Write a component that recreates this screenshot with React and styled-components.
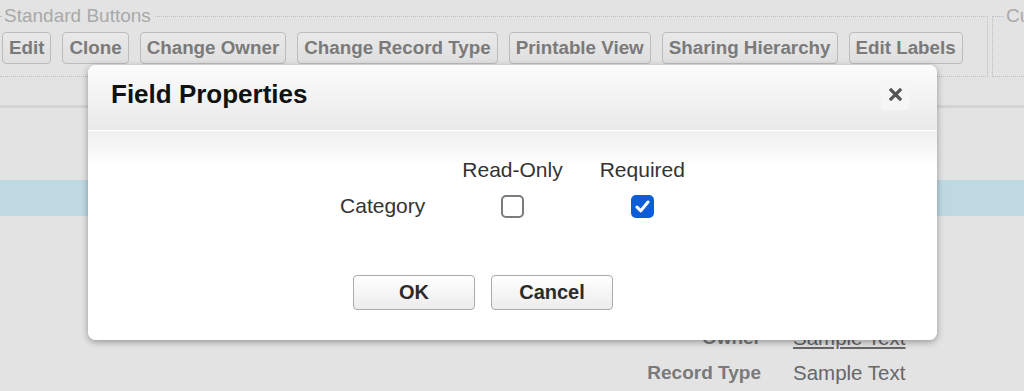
import React from 'react'
import styled, { createGlobalStyle } from 'styled-components'

const GlobalStyle = createGlobalStyle`
  html, body {
    margin: 0;
    padding: 0;
  }
  body {
    background: #e3e3e3;
    font-family: "Liberation Sans", Arial, sans-serif;
    overflow: hidden;
  }
`

const Page = styled.div`
  position: relative;
  width: 1024px;
  height: 391px;
  overflow: hidden;
`

const ButtonGroups = styled.div`
  display: flex;
  width: 1300px;
  padding-top: 5px;
`

const Group = styled.fieldset`
  box-sizing: border-box;
  flex: none;
  width: ${p => p.$width}px;
  min-inline-size: 0;
  margin: 0 0 0 ${p => (p.$first ? 0 : 4)}px;
  padding: 5px 0 12px ${p => (p.$first ? 2 : 11)}px;
  border: 1px dotted #bdbdbd;
  border-left: ${p => (p.$first ? 'none' : '1px dotted #bdbdbd')};
`

const Legend = styled.legend`
  padding: 0 4px 0 2px;
  font-size: 19px;
  line-height: 22px;
  color: #a9a9a9;
`

const Toolbar = styled.div`
  display: flex;
  gap: 11px;
`

const ToolButton = styled.button`
  height: 32px;
  margin: 0;
  padding: 0 6px;
  font-family: inherit;
  font-size: 18.8px;
  font-weight: bold;
  color: #7a7a7a;
  background: linear-gradient(#e9e9e9, #dfdfdf);
  border: 1px solid #bcbcbc;
  border-radius: 4px;
`

const Divider = styled.div`
  margin-top: 28px;
  height: 3px;
  background: #d3d3d3;
`

const HighlightRow = styled.div`
  margin-top: 72px;
  height: 36px;
  background: #bfd9e3;
`

const Details = styled.div`
  margin-top: 104px;
`

const DetailRow = styled.div`
  display: grid;
  grid-template-columns: 761px 1fr;
  column-gap: 32px;
  align-items: center;
  height: 35px;
`

const DetailLabel = styled.div`
  text-align: right;
  font-size: 19px;
  font-weight: bold;
  color: #7a7a7a;
`

const DetailValue = styled.div`
  font-size: 20.5px;
  color: #676767;
  text-decoration: ${p => (p.$link ? 'underline' : 'none')};
`

const Dialog = styled.div`
  position: absolute;
  left: 88px;
  top: 65px;
  width: 849px;
  background: #fff;
  border-radius: 8px;
  box-shadow: 0 2px 7px rgba(0, 0, 0, 0.35);
  overflow: hidden;
`

const DialogHeader = styled.div`
  box-sizing: border-box;
  height: 66px;
  display: flex;
  align-items: center;
  justify-content: space-between;
  padding: 0 28px 6px 23px;
  background: linear-gradient(#fcfcfc, #e9e9e9);
  border-bottom: 1px solid #fff;
`

const Title = styled.h2`
  margin: 0;
  font-size: 26px;
  font-weight: bold;
  color: #111;
`

const CloseButton = styled.button`
  width: 28px;
  height: 31px;
  padding: 0;
  display: flex;
  align-items: center;
  justify-content: center;
  background: #f6f6f6;
  border: none;
  border-radius: 4px;
`

const DialogBody = styled.div`
  padding: 27px 0 30px;
  background: linear-gradient(#efefef, #fff 35px);
`

const FieldGrid = styled.div`
  display: grid;
  grid-template-columns: repeat(3, auto);
  justify-content: center;
  align-items: center;
  column-gap: 37px;
  row-gap: 12px;
  font-size: 21px;
  line-height: 24px;
  color: #333;
`

const HeadCell = styled.div`
  text-align: center;
`

const LabelCell = styled.div`
  text-align: right;
`

const Box = styled.span`
  box-sizing: border-box;
  justify-self: center;
  width: 23px;
  height: 23px;
  display: flex;
  align-items: center;
  justify-content: center;
  border-radius: 5px;
  border: 2px solid ${p => (p.$checked ? '#0b5ed7' : '#7b7b7b')};
  background: ${p => (p.$checked ? '#0b5ed7' : '#fff')};
`

const Actions = styled.div`
  display: flex;
  justify-content: center;
  gap: 16px;
  margin-top: 57px;
  padding-right: 59px;
`

const DialogButton = styled.button`
  width: 122px;
  height: 35px;
  margin: 0;
  font-family: inherit;
  font-size: 20px;
  font-weight: bold;
  color: #2b2b2b;
  background: linear-gradient(#fff, #ececec);
  border: 1px solid #ababab;
  border-radius: 4px;
`

function Checkbox({ checked }) {
  return (
    <Box $checked={checked}>
      {checked && (
        <svg width="15" height="13" viewBox="0 0 15 13">
          <path d="M2 7.2 L5.8 10.8 L13 2" fill="none" stroke="#fff" strokeWidth="3" strokeLinecap="round" strokeLinejoin="round" />
        </svg>
      )}
    </Box>
  )
}

const standardButtons = ['Edit', 'Clone', 'Change Owner', 'Change Record Type', 'Printable View', 'Sharing Hierarchy', 'Edit Labels']

export default function App() {
  return (
    <Page>
      <GlobalStyle />
      <ButtonGroups>
        <Group $first $width={988}>
          <Legend>Standard Buttons</Legend>
          <Toolbar>
            {standardButtons.map(label => (
              <ToolButton key={label}>{label}</ToolButton>
            ))}
          </Toolbar>
        </Group>
        <Group $width={220}>
          <Legend>Custom Buttons</Legend>
        </Group>
      </ButtonGroups>
      <Divider />
      <HighlightRow />
      <Details>
        <DetailRow>
          <DetailLabel>Owner</DetailLabel>
          <DetailValue $link>Sample Text</DetailValue>
        </DetailRow>
        <DetailRow>
          <DetailLabel>Record Type</DetailLabel>
          <DetailValue>Sample Text</DetailValue>
        </DetailRow>
      </Details>

      <Dialog>
        <DialogHeader>
          <Title>Field Properties</Title>
          <CloseButton aria-label="Close">
            <svg width="13" height="13" viewBox="0 0 13 13">
              <path d="M2 2 L11 11 M11 2 L2 11" stroke="#555" strokeWidth="3.2" strokeLinecap="square" />
            </svg>
          </CloseButton>
        </DialogHeader>
        <DialogBody>
          <FieldGrid>
            <div />
            <HeadCell>Read-Only</HeadCell>
            <HeadCell>Required</HeadCell>
            <LabelCell>Category</LabelCell>
            <Checkbox checked={false} />
            <Checkbox checked />
          </FieldGrid>
          <Actions>
            <DialogButton>OK</DialogButton>
            <DialogButton>Cancel</DialogButton>
          </Actions>
        </DialogBody>
      </Dialog>
    </Page>
  )
}
